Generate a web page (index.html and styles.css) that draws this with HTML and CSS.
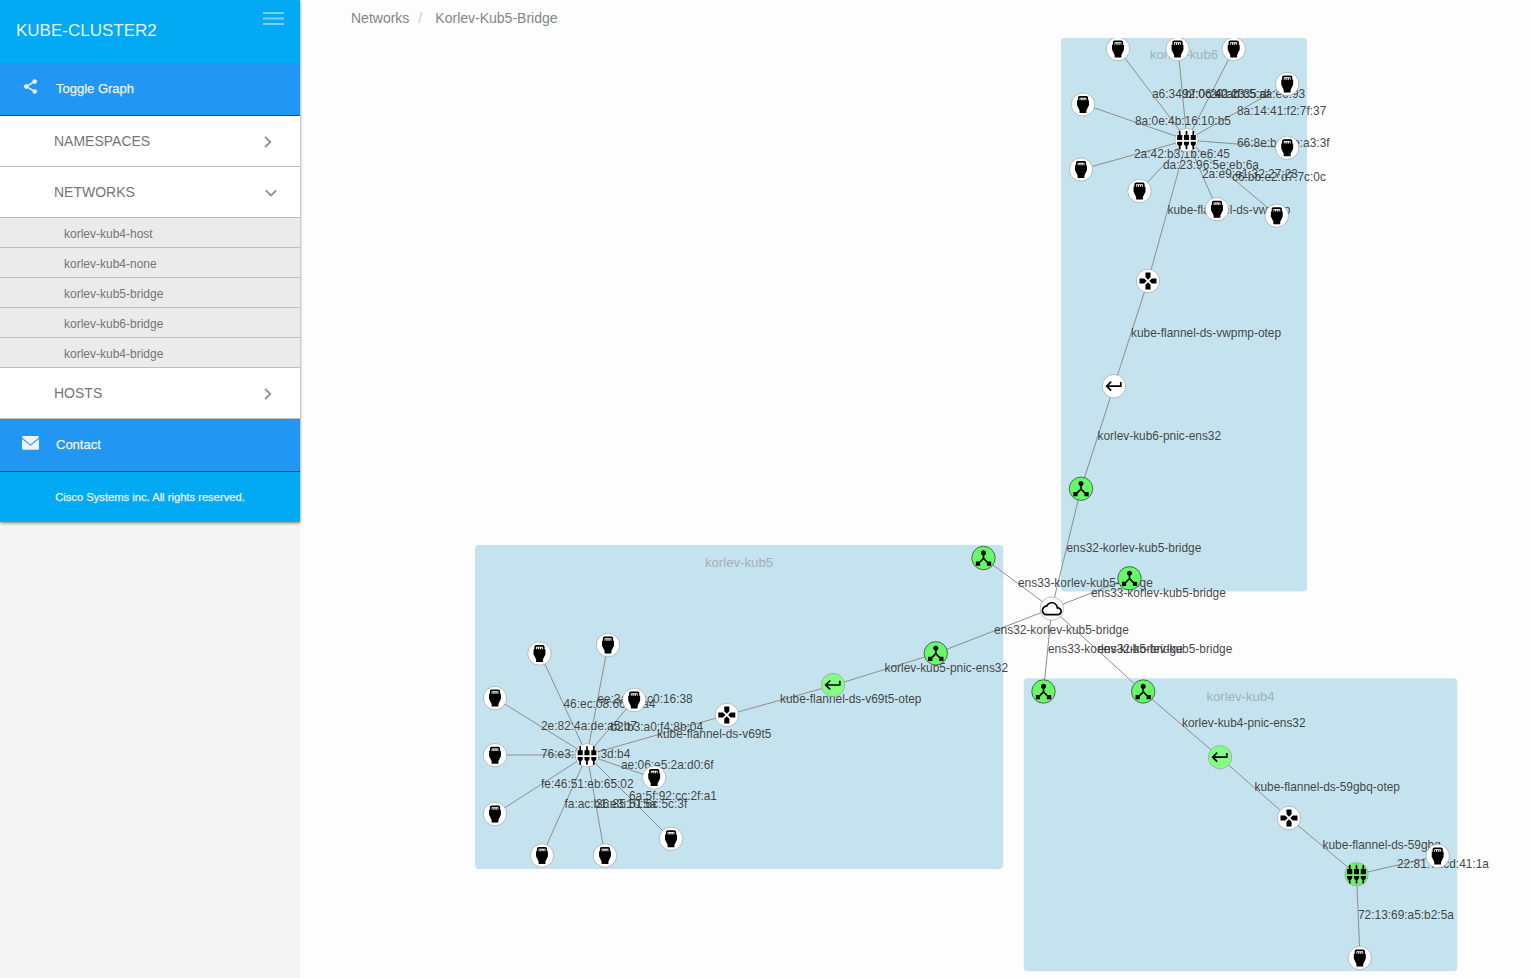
FILE: index.html
```html
<!DOCTYPE html>
<html lang="en">
<head>
<meta charset="utf-8">
<title>Kube-Cluster2</title>
<link rel="stylesheet" href="styles.css">
</head>
<body>
<div class="app">
  <aside class="sidebar">
    <nav class="menu">
      <header class="menu-header">
        <h1 class="cluster">KUBE-CLUSTER2</h1>
        <svg class="burger" width="21" height="14" viewBox="0 0 21 14"><path d="M0 1h21M0 6.500h21M0 12h21"/></svg>
      </header>
      <a class="action">
        <svg class="action-icon" width="17" height="17" viewBox="0 0 24 24"><path d="M18 16.08c-.76 0-1.44.3-1.96.77L8.91 12.7c.05-.23.09-.46.09-.7s-.04-.47-.09-.7l7.05-4.11c.54.5 1.25.81 2.04.81 1.66 0 3-1.34 3-3s-1.34-3-3-3-3 1.34-3 3c0 .24.04.47.09.7L8.04 9.81C7.5 9.31 6.79 9 6 9c-1.66 0-3 1.34-3 3s1.34 3 3 3c.79 0 1.5-.31 2.04-.81l7.12 4.16c-.05.21-.08.43-.08.65 0 1.61 1.31 2.92 2.92 2.92s2.92-1.31 2.92-2.92-1.31-2.92-2.92-2.92z"/></svg>
        <span class="action-text">Toggle Graph</span>
      </a>
      <a class="section"><span>NAMESPACES</span><svg class="chevron" width="8" height="12" viewBox="0 0 8 12"><path d="M1 .8 6.300 6 1 11.200"/></svg></a>
      <a class="section"><span>NETWORKS</span><svg class="chevron open" width="12" height="8" viewBox="0 0 12 8"><path d="M.8 1.300 6 6.500l5.200-5.200"/></svg></a>
      <a class="item">korlev-kub4-host</a>
      <a class="item">korlev-kub4-none</a>
      <a class="item">korlev-kub5-bridge</a>
      <a class="item">korlev-kub6-bridge</a>
      <a class="item">korlev-kub4-bridge</a>
      <a class="section"><span>HOSTS</span><svg class="chevron" width="8" height="12" viewBox="0 0 8 12"><path d="M1 .8 6.300 6 1 11.200"/></svg></a>
      <a class="action contact">
        <svg class="action-icon" width="17" height="14" viewBox="0 0 17 14"><path d="M1.5 0h14Q17 0 17 1.5L8.5 8.4 0 1.5Q0 0 1.5 0zM0 3l8.5 6.8L17 3v9.3q0 1.5-1.5 1.5h-14Q0 13.8 0 12.3z"/></svg>
        <span class="action-text">Contact</span>
      </a>
      <footer class="copyright">Cisco Systems inc. All rights reserved.</footer>
    </nav>
  </aside>
  <main class="content">
    <div class="breadcrumb"><span>Networks</span><span class="slash">/</span><span>Korlev-Kub5-Bridge</span></div>
    <svg class="graph" width="1232" height="940" viewBox="300 38 1232 940">
      <defs>
        <g id="port"><circle r="11.7"/><path class="glyph" d="M18 7V4c0-1.1-.9-2-2-2H8c-1.1 0-2 .9-2 2v3H5v6l3 6v3h8v-3l3-6V7h-1zM8 4h8v3h-1V5h-1v2h-1.5V5h-1v2H10V5H9v2H8V4z"/></g>
        <g id="bridge"><circle r="11.7"/><path class="glyph" d="M5 2c0-.55-.45-1-1-1s-1 .45-1 1v4H1v6h6V6H5V2zm4 14c0 1.3.84 2.4 2 2.82V23h2v-4.18c1.16-.41 2-1.51 2-2.82v-2H9v2zm-8 0c0 1.3.84 2.4 2 2.82V23h2v-4.18C6.16 18.4 7 17.3 7 16v-2H1v2zM21 6V2c0-.55-.45-1-1-1s-1 .45-1 1v4h-2v6h6V6h-2zm-8-4c0-.55-.45-1-1-1s-1 .45-1 1v4H9v6h6V6h-2V2zm4 14c0 1.3.84 2.4 2 2.82V23h2v-4.18c1.16-.41 2-1.51 2-2.82v-2h-6v2z"/></g>
        <g id="pad"><circle r="11.7"/><path class="glyph" d="M15 7.5V2H9v5.5l3 3 3-3zM7.5 9H2v6h5.5l3-3-3-3zM9 16.5V22h6v-5.5l-3-3-3 3zM16.5 9l-3 3 3 3H22V9h-5.5z"/></g>
        <g id="otep"><circle r="11.7"/><path class="glyph" d="M19 7v4H5.83l3.58-3.59L8 6l-6 6 6 6 1.41-1.41L5.83 13H21V7z"/></g>
        <g id="hub"><circle r="11.7"/><path class="glyph" d="M17 16l-4-4V8.82C14.16 8.4 15 7.3 15 6c0-1.66-1.34-3-3-3S9 4.34 9 6c0 1.3.84 2.4 2 2.82V12l-4 4H3v5h5v-3.05l4-4.2 4 4.2V21h5v-5h-4z"/></g>
        <g id="cloud"><circle r="11.7"/><path class="glyph" d="M19.35 10.04C18.67 6.59 15.64 4 12 4 9.11 4 6.6 5.64 5.35 8.04 2.34 8.36 0 10.91 0 14c0 3.31 2.69 6 6 6h13c2.76 0 5-2.24 5-5 0-2.64-2.05-4.78-4.65-4.96zM19 18H6c-2.21 0-4-1.79-4-4s1.79-4 4-4h.71C7.37 7.69 9.48 6 12 6c3.04 0 5.5 2.46 5.5 5.5v.5H19c1.66 0 3 1.34 3 3s-1.34 3-3 3z"/></g>
      </defs>

      <g class="hosts">
        <rect x="1061" y="38" width="246" height="553.5" rx="4"/>
        <rect x="475" y="545" width="528.3" height="324" rx="4"/>
        <rect x="1023.7" y="678.3" width="433.6" height="293" rx="4"/>
      </g>
      <g class="host-names">
        <text x="1184" y="59">korlev-kub6</text>
        <text x="739" y="567">korlev-kub5</text>
        <text x="1240.5" y="701">korlev-kub4</text>
      </g>

      <g class="links">
        <path d="M1187 140 1118 49M1187 140 1178 49M1187 140 1234 49M1187 140 1287 84M1187 140 1287 148M1187 140 1083 104M1187 140 1081 169.500M1187 140 1139.500 191M1187 140 1217 209M1187 140 1277 215.500"/>
        <path d="M1187 140 1148 281 1114 386 1081 488.500 1051.800 608.500"/>
        <path d="M587 755 540 653.500M587 755 608 645M587 755 634 700M587 755 495 698M587 755 495 755M587 755 495 814M587 755 542 855.500M587 755 605 855.500M587 755 671 839M587 755 654 778"/>
        <path d="M587 755 727 715 833 685.500 936 653.500 1051.800 608.500M983.500 558 1051.800 608.500 1129.500 578M1051.800 608.500 1043.500 691.500"/>
        <path d="M1051.800 608.500 1143 691.500 1220 757.500 1289 818 1356.500 874.500 1437.500 856M1356.500 874.500 1360 958"/>
      </g>

      <g class="labels">
        <text x="1152" y="98">a6:34:bf:06:42:23</text>
        <text x="1182" y="98">92:0c:e0:cf:35:df</text>
        <text x="1210" y="98">20:ab:c5:aa:e6:93</text>
        <text x="1237" y="115">8a:14:41:f2:7f:37</text>
        <text x="1135" y="125">8a:0e:4b:16:10:b5</text>
        <text x="1237" y="147">66:8e:b4:7e:a3:3f</text>
        <text x="1134" y="158">2a:42:b3:1b:e6:45</text>
        <text x="1163" y="169">da:23:96:5e:eb:6a</text>
        <text x="1202" y="178">2a:e9:e1:32:27:23</text>
        <text x="1232" y="181">c6:bb:e2:d7:7c:0c</text>
        <text x="1167.500" y="214">kube-flannel-ds-vwpmp</text>
        <text x="1131" y="337">kube-flannel-ds-vwpmp-otep</text>
        <text x="1097.500" y="440">korlev-kub6-pnic-ens32</text>
        <text x="1066.500" y="552">ens32-korlev-kub5-bridge</text>
        <text x="1018" y="587">ens33-korlev-kub5-bridge</text>
        <text x="1091" y="597">ens33-korlev-kub5-bridge</text>
        <text x="994" y="634">ens32-korlev-kub5-bridge</text>
        <text x="1048" y="653">ens33-korlev-kub5-bridge</text>
        <text x="1097.500" y="653">ens32-korlev-kub5-bridge</text>
        <text x="884.500" y="672">korlev-kub5-pnic-ens32</text>
        <text x="780" y="703">kube-flannel-ds-v69t5-otep</text>
        <text x="657" y="738">kube-flannel-ds-v69t5</text>
        <text x="597.500" y="703">ee:3a:4d:c0:16:38</text>
        <text x="563.500" y="708">46:ec:08:66:5f:a4</text>
        <text x="541" y="730">2e:82:4a:de:a5:b7</text>
        <text x="610.500" y="731">b2:b3:a0:f4:8b:04</text>
        <text x="541" y="758">76:e3:1f:f1:3d:b4</text>
        <text x="621" y="769">ae:06:e5:2a:d0:6f</text>
        <text x="541" y="788">fe:46:51:eb:65:02</text>
        <text x="629" y="800">6a:5f:92:cc:2f:a1</text>
        <text x="564.500" y="808">fa:ac:b1:e3:10:5a</text>
        <text x="596" y="808">36:85:51:6c:5c:3f</text>
        <text x="1182" y="727">korlev-kub4-pnic-ens32</text>
        <text x="1254.500" y="791">kube-flannel-ds-59gbq-otep</text>
        <text x="1322.500" y="849">kube-flannel-ds-59gbq</text>
        <text x="1397" y="868">22:81:7f:cd:41:1a</text>
        <text x="1358" y="919">72:13:69:a5:b2:5a</text>
      </g>

      <g class="nodes">
        <use href="#port" x="1118" y="49"/><use href="#port" x="1177.500" y="49"/><use href="#port" x="1233.700" y="49"/>
        <use href="#port" x="1287.200" y="84"/><use href="#port" x="1287.200" y="147.800"/><use href="#port" x="1083" y="104.500"/>
        <use href="#port" x="1081" y="169.500"/><use href="#port" x="1139.500" y="191"/><use href="#port" x="1217" y="209.300"/><use href="#port" x="1276.800" y="215.700"/>
        <use href="#bridge" x="1186.500" y="140"/>
        <use href="#pad" x="1148" y="281"/>
        <use href="#otep" x="1114" y="386.200"/>
        <use href="#port" x="539.500" y="653.500"/><use href="#port" x="608" y="645"/><use href="#port" x="634.200" y="700"/>
        <use href="#port" x="495" y="698"/><use href="#port" x="495" y="755.200"/><use href="#port" x="495" y="814"/>
        <use href="#port" x="542" y="855.500"/><use href="#port" x="605" y="855.500"/><use href="#port" x="671" y="838.800"/><use href="#port" x="654.200" y="777.500"/>
        <use href="#bridge" x="587" y="755.300"/>
        <use href="#pad" x="726.800" y="715"/>
        <use href="#pad" x="1289" y="818"/>
        <use href="#port" x="1437.700" y="856"/><use href="#port" x="1359.800" y="958"/>
        <use href="#cloud" x="1051.800" y="608.700"/>
        <g class="healthy">
          <use href="#hub" x="1081" y="488.700"/><use href="#hub" x="983.500" y="558"/><use href="#hub" x="1129.500" y="578.300"/>
          <use href="#hub" x="935.800" y="653.300"/><use href="#hub" x="1043.500" y="691.500"/><use href="#hub" x="1143.200" y="691.500"/>
        </g>
        <g class="soft">
          <use href="#otep" x="833" y="685"/><use href="#otep" x="1220" y="757.200"/>
        </g>
        <g class="mid"><use href="#bridge" x="1356.500" y="874.200"/></g>
      </g>
    </svg>
  </main>
</div>
</body>
</html>
```
FILE: styles.css
```css
* { box-sizing: border-box; }
body {
  margin: 0;
  font-family: "Liberation Sans", Arial, sans-serif;
  background: #fdfdfd;
}
.app { display: flex; height: 978px; overflow: hidden; }
.sidebar { width: 300px; flex: none; background: #f4f4f4; }
.menu {
  display: flex;
  flex-direction: column;
  position: relative;
  background: #fff;
  box-shadow: 0 1px 3px rgba(0, 0, 0, .5);
}
.menu-header {
  height: 63px;
  display: flex;
  justify-content: space-between;
  padding: 12px 16px 0;
  background: #02a9f3;
}
.cluster { margin: 9px 0 0; font-size: 17px; line-height: 20px; font-weight: 400; color: #e9f2f8; }
.burger path { stroke: #7bcffa; stroke-width: 2; }
.action {
  height: 53px;
  display: flex;
  border-bottom: 1px solid #2a455f;
  background: #2196f3;
  color: #eef2f8;
  font-size: 13px;
  line-height: 51px;
  -webkit-text-stroke: .25px #eef2f8;
}
.action-icon { width: 17px; flex: none; margin: 15px 17px 0 22px; fill: #f0f2f6; stroke: #f0f2f6; stroke-width: .6; }
.contact .action-icon { margin-top: 17px; stroke: none; }
.section {
  height: 51px;
  display: flex;
  align-items: center;
  justify-content: space-between;
  padding: 0 28px 0 54px;
  border-bottom: 1px solid #bdbdbd;
  color: #757575;
  font-size: 14px;
}
.chevron { margin-top: 2px; fill: none; stroke: #8f8f8f; stroke-width: 1.8; }
.chevron.open { margin-right: -5px; }
.item {
  height: 30px;
  padding-left: 64px;
  border-bottom: 1px solid #bdbdbd;
  background: #ebebeb;
  color: #757575;
  font-size: 12px;
  line-height: 32px;
}
.copyright {
  height: 50px;
  background: #02a9f3;
  color: #e9f2f8;
  font-size: 11.2px;
  line-height: 50px;
  text-align: center;
  -webkit-text-stroke: .25px #e9f2f8;
}
.content { flex: 1; display: flex; flex-direction: column; }
.breadcrumb {
  height: 38px;
  display: flex;
  padding-left: 51px;
  font-size: 14px;
  line-height: 36px;
  color: #80868a;
}
.slash { width: 26px; padding-left: 9px; color: #c9c9c9; }
.graph { display: block; flex: none; }
.hosts rect { fill: #c5e3ee; }
.host-names text { font-size: 13.2px; fill: #9eb0b8; text-anchor: middle; }
.links path { fill: none; stroke: #8b8f91; stroke-width: 1; }
.labels text { font-size: 11.9px; fill: #333; fill-opacity: .92; }
.healthy, .soft, .mid { --node: #fff; }
.soft { --node: #84fc84; }
.mid { --node: #70ee70; }
circle { fill: var(--node, #fff); stroke: #8d9598; stroke-width: .6; }
#hub circle { fill: #66fa66; stroke: #444; stroke-width: .8; }
.glyph { transform: translate(-10.2px, -10.2px) scale(.85); }
```
